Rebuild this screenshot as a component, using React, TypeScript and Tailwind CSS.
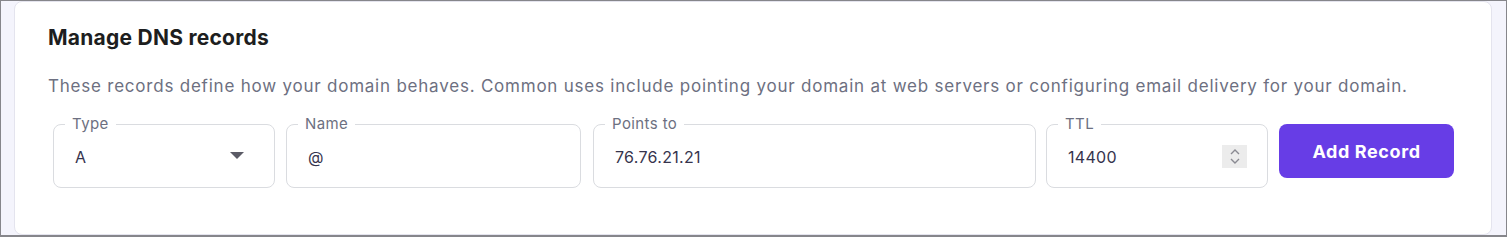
import React from "react";

function Field({
  label,
  value,
  className,
  pr = "pr-[20px]",
  children,
}: {
  label: string;
  value: string;
  className: string;
  pr?: string;
  children?: React.ReactNode;
}) {
  return (
    <div
      className={`relative ${className} h-[64px] shrink-0 rounded-[8px] border border-[#dadce0] bg-white flex items-center pl-[21px] ${pr}`}
    >
      <span className="absolute left-[11px] -top-[10px] bg-white px-[7px] text-[15px] tracking-[0.4px] leading-[18px] text-[#6d7081]">
        {label}
      </span>
      <span className="flex-1 text-[16px] tracking-[0.3px] text-[#36344d] pt-[2px]">{value}</span>
      {children}
    </div>
  );
}

export default function App() {
  return (
    <div
      className="w-[1507px] h-[237px] border border-b-2 border-[#86868b] bg-[#f4f4fc] pl-[13px] pr-[14px]"
      style={{ fontFamily: "Inter, 'Noto Sans', sans-serif" }}
    >
      <div className="h-full rounded-[8px] border border-[#e4e4ee] bg-white pl-[33px] pt-[22px]">
        <h2 className="text-[21px] leading-[28px] font-bold tracking-[0.25px] text-[#1d1e20]">Manage DNS records</h2>
        <p className="mt-[22px] text-[17px] leading-[24px] tracking-[0.78px] text-[#6d7081]">
          These records define how your domain behaves. Common uses include pointing your domain at web servers or
          configuring email delivery for your domain.
        </p>
        <div className="mt-[26px] ml-[5px] flex items-start">
          <Field label="Type" value="A" className="w-[222px]">
            <svg width="14" height="8" viewBox="0 0 14 8" className="mr-[10px]">
              <path d="M0 0 L14 0 L7 7 Z" fill="#5b5b66" />
            </svg>
          </Field>
          <Field label="Name" value="@" className="ml-[11px] w-[295px]" />
          <Field label="Points to" value="76.76.21.21" className="ml-[12px] w-[443px]" />
          <Field label="TTL" value="14400" className="ml-[10px] w-[222px]" pr="pr-[20px]">
            <div className="w-[25px] h-[23px] bg-[#ececec] flex flex-col items-center justify-center gap-[3px]">
              <svg width="10" height="6" viewBox="0 0 10 6">
                <path d="M1 5 L5 1 L9 5" stroke="#8a8a92" strokeWidth="1.4" fill="none" />
              </svg>
              <svg width="10" height="6" viewBox="0 0 10 6">
                <path d="M1 1 L5 5 L9 1" stroke="#8a8a92" strokeWidth="1.4" fill="none" />
              </svg>
            </div>
          </Field>
          <button className="ml-[11px] w-[175px] h-[54px] shrink-0 rounded-[8px] bg-[#673de6] text-white text-[18px] tracking-[0.6px] font-bold">
            Add Record
          </button>
        </div>
      </div>
    </div>
  );
}
